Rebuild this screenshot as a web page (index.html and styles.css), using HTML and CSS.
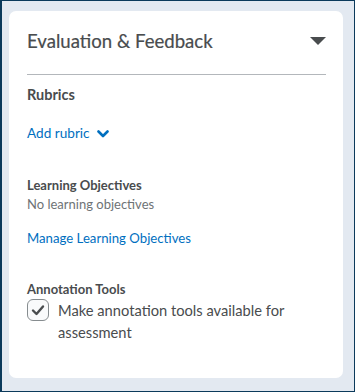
FILE: index.html
```html
<!DOCTYPE html>
<html>
<head>
<meta charset="utf-8">
<link rel="stylesheet" href="styles.css">
</head>
<body>
<div class="frame">
  <section class="card">
    <header class="card-head">
      <h2 class="card-title">Evaluation &amp; Feedback</h2>
      <span class="caret" aria-hidden="true"></span>
    </header>
    <div class="group rubrics">
      <div class="label label-lg">Rubrics</div>
      <a class="link add-rubric" href="#">Add rubric
        <svg class="chev" width="12" height="8" viewBox="0 0 12 8"><path d="M1.5 1.5 L6 6 L10.5 1.5" fill="none" stroke="#006fbf" stroke-width="2.6" stroke-linecap="round" stroke-linejoin="round"/></svg>
      </a>
    </div>
    <div class="group objectives">
      <div class="label">Learning Objectives</div>
      <div class="muted">No learning objectives</div>
      <a class="link manage" href="#">Manage Learning Objectives</a>
    </div>
    <div class="group annotation">
      <div class="label">Annotation Tools</div>
      <label class="check">
        <span class="box"><svg width="14" height="12" viewBox="0 0 14 12"><path d="M2 6.5 L5.5 10 L12 2.5" fill="none" stroke="#494c4e" stroke-width="2.4" stroke-linecap="round" stroke-linejoin="round"/></svg></span>
        <span class="check-text">Make annotation tools available for assessment</span>
      </label>
    </div>
  </section>
</div>
</body>
</html>
```
FILE: styles.css
```css
html, body {
  margin: 0;
  padding: 0;
}
body {
  font-family: Lato, "Open Sans", sans-serif;
  color: #494c4e;
}
.frame {
  box-sizing: border-box;
  width: 355px;
  height: 392px;
  background: #e3e9f1;
  border: 1px solid #0b3a5b;
  border-left-width: 2px;
  padding: 10px 11px 13px 7px;
}
.card {
  box-sizing: border-box;
  background: #fff;
  border-radius: 7px;
  height: 100%;
  padding: 0 17px 0 18px;
}
.card-head {
  display: flex;
  align-items: center;
  justify-content: space-between;
  height: 63px;
  border-bottom: 1px solid #b3b7bb;
}
.card-title {
  margin: 0;
  font-size: 18.6px;
  font-weight: 400;
  line-height: 24px;
  color: #494c4e;
  margin-bottom: 4px;
  -webkit-text-stroke: 0.2px #494c4e;
}
.caret {
  width: 0;
  height: 0;
  border-left: 8px solid transparent;
  border-right: 8px solid transparent;
  border-top: 8px solid #494c4e;
  margin-bottom: 3px;
}
.label {
  font-size: 13px;
  font-weight: 700;
  line-height: 19px;
  color: #494c4e;
}
.label-lg {
  font-size: 14.5px;
}
.rubrics {
  padding-top: 10px;
}
.link {
  display: inline-flex;
  align-items: center;
  color: #006fbf;
  text-decoration: none;
  font-size: 13.2px;
  line-height: 19px;
}
.add-rubric {
  margin-top: 20px;
  font-size: 13.6px;
}
.chev {
  margin-left: 7px;
}
.objectives {
  padding-top: 33px;
}
.muted {
  font-size: 13px;
  line-height: 19px;
  color: #6e7376;
}
.manage {
  margin-top: 15px;
}
.annotation {
  padding-top: 32px;
}
.check {
  display: flex;
  align-items: flex-start;
  gap: 9px;
  margin-top: 0;
}
.box {
  flex: none;
  box-sizing: border-box;
  width: 22px;
  height: 22px;
  border: 1px solid #868c8f;
  border-radius: 6px;
  background: #f9fafb;
  display: flex;
  align-items: center;
  justify-content: center;
}
.check-text {
  font-size: 14.7px;
  line-height: 22px;
  color: #494c4e;
}
```
